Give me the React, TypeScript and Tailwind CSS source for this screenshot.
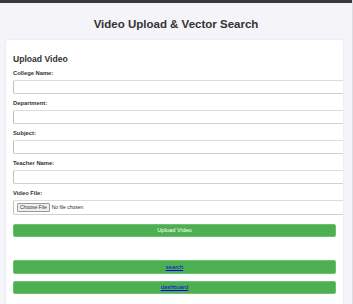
import React from "react";

const font = { fontFamily: '"Liberation Sans", Arial, sans-serif' };

function Field({ label }: { label: string }) {
  return (
    <div className="mb-[6px]">
      <div className="h-[7px] text-[5.8px] leading-[7px] font-bold text-[#333] mb-[3px]">{label}</div>
      <div className="h-[14px] w-[340px] border border-[#dcdcdc] border-l-[#bdbdbd] border-b-[#cfcfcf] border-r-0 rounded-l-[2px] bg-white" />
    </div>
  );
}

export default function App() {
  return (
    <div className="min-h-[304px] bg-[#f4f4f9] overflow-hidden border-r border-[#dcdce2]" style={font}>
      <div className="h-[3px] bg-[#3a3a3a]" />
      <h1 className="mt-[14px] mb-[9px] h-[14px] text-center text-[11.5px] leading-[14px] font-bold text-[#333]">
        Video Upload &amp; Vector Search
      </h1>
      <div className="ml-[6px] w-[337px] h-[270px] bg-white rounded-[3px] shadow-[0_0_3px_rgba(0,0,0,0.08)] overflow-hidden px-[7px] pt-[14px]">
        <h2 className="h-[11px] text-[8.6px] leading-[11px] font-bold text-[#333] mb-[5px]">Upload Video</h2>
        <Field label="College Name:" />
        <Field label="Department:" />
        <Field label="Subject:" />
        <Field label="Teacher Name:" />
        <div>
          <div className="h-[7px] text-[5.8px] leading-[7px] font-bold text-[#333] mb-[3px]">Video File:</div>
          <div className="h-[15px] w-[340px] border border-[#dcdcdc] border-l-[#bdbdbd] border-b-[#cfcfcf] border-r-0 rounded-l-[2px] bg-white flex items-center pl-[3px] gap-[2px]">
            <span className="h-[9px] px-[2px] border border-[#999] bg-[#efefef] rounded-[1px] text-[5px] leading-[7px] text-[#333]">Choose File</span>
            <span className="text-[5px] leading-[7px] text-[#333]">No file chosen</span>
          </div>
        </div>
        <button className="mt-[8px] w-full h-[13px] bg-[#4caf50] border border-[#6cc070] rounded-[2px] text-white text-[5.8px] leading-[11px] text-center">
          Upload Video
        </button>
        <div className="mt-[21px] w-full h-[14px] bg-[#4caf50] border border-[#6cc070] rounded-[2px] text-center text-[5.8px] leading-[12px]">
          <a href="#" className="text-[#0000ee] underline">search</a>
        </div>
        <div className="mt-[7px] w-full h-[13px] bg-[#4caf50] border border-[#6cc070] rounded-[2px] text-center text-[5.8px] leading-[11px]">
          <a href="#" className="text-[#0000ee] underline">dashboard</a>
        </div>
      </div>
    </div>
  );
}
